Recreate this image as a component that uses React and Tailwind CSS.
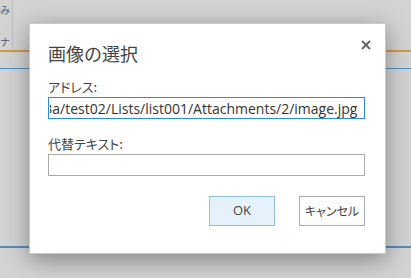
import { useEffect, useRef } from "react";

const jp = { fontFamily: '"Noto Sans CJK JP", "Noto Sans", sans-serif' };
const latin = { fontFamily: '"Open Sans", "Noto Sans CJK JP", sans-serif' };

function Field({ label, value, focused }) {
  const ref = useRef(null);

  // the real box is scrolled to the end of the address
  useEffect(() => {
    if (ref.current) ref.current.scrollLeft = ref.current.scrollWidth;
  }, []);

  return (
    <div>
      <div className="text-[13px] leading-[16px] text-[#444] [font-feature-settings:'palt']" style={jp}>
        {label}
      </div>
      <input
        ref={ref}
        readOnly
        defaultValue={value}
        className={[
          "mt-[2px] block h-[22px] w-full border bg-white px-[1px] pr-[7px] text-[14px] text-[#333] outline-none",
          focused ? "border-[#2a8dd4]" : "border-[#ababab]",
        ].join(" ")}
        style={latin}
      />
    </div>
  );
}

export default function App() {
  return (
    <div className="relative h-[278px] w-[411px] overflow-hidden bg-[#d3d3d3]" style={jp}>
      {/* page behind the overlay */}
      <div className="flex h-[50px]">
        <div className="flex w-[13px] flex-col overflow-hidden border-r border-[#bdbdbd] pt-[3px] text-[10px] leading-[14px] text-[#4a5a7a]">
          <span>み</span>
          <span className="mt-[18px]">ナ</span>
        </div>
      </div>
      <div className="h-[2px] bg-[#d39a3e]" />
      <div className="h-[16px]" />
      <div className="h-[1px] bg-[#4f8ec4]" />
      <div className="h-[177px]" />
      <div className="h-[2px] bg-[#4f8ec4]" />

      {/* dialog */}
      <div className="absolute left-[29px] top-[23px] h-[231px] w-[357px] border border-[#c9c9c9] bg-white px-[18px] pt-[16px] shadow-[0_6px_22px_rgba(0,0,0,0.38)]">
        <h1 className="text-[18px] leading-[26px] text-[#444]" style={jp}>
          画像の選択
        </h1>
        <button className="absolute right-[14px] top-[15px] flex h-[11px] w-[11px] items-center justify-center text-[#666]">
          <svg viewBox="0 0 10 10" width="10" height="10">
            <path d="M1 1 L9 9 M9 1 L1 9" stroke="currentColor" strokeWidth="2" />
          </svg>
        </button>

        <div className="mr-[2px] mt-[13px]">
          <Field
            label="アドレス:"
            value="http://sp2013a/test02/Lists/list001/Attachments/2/image.jpg"
            focused
          />
        </div>
        <div className="mr-[2px] mt-[17px]">
          <Field label="代替テキスト:" value="" />
        </div>

        <div className="mr-[2px] mt-[20px] flex justify-end gap-[24px]">
          <button
            className="h-[30px] w-[66px] border border-[#92c0e0] bg-[#e5f1fb] text-[13px] text-[#444]"
            style={latin}
          >
            OK
          </button>
          <button
            className="h-[30px] w-[66px] whitespace-nowrap border border-[#ababab] bg-[#fdfdfd] text-[12px] text-[#444] [font-feature-settings:'palt']"
            style={jp}
          >
            キャンセル
          </button>
        </div>
      </div>
    </div>
  );
}
